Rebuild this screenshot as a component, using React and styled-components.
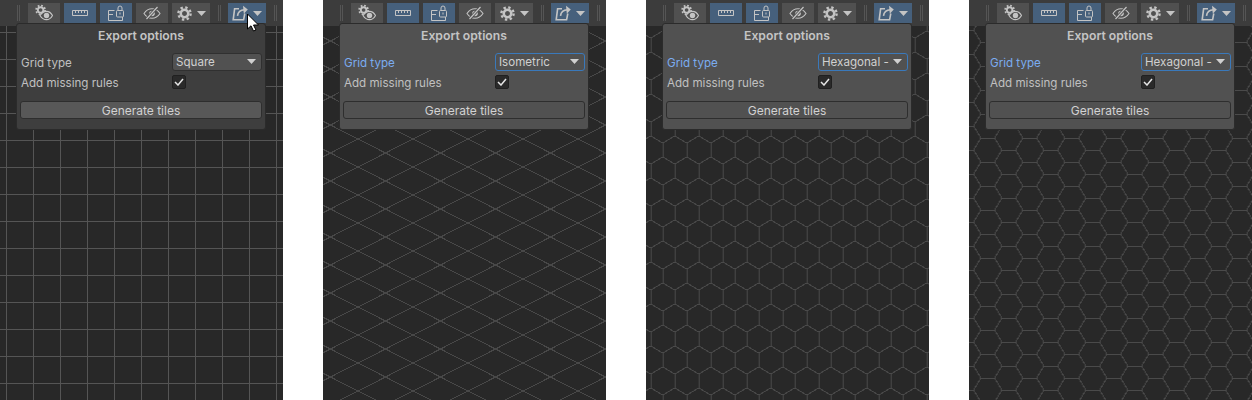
import React from "react";
import styled, { createGlobalStyle } from "styled-components";

const GlobalStyle = createGlobalStyle`
  html, body {
    margin: 0;
    padding: 0;
    background: #fff;
  }
  body {
    font-family: Inter, "Liberation Sans", sans-serif;
  }
`;

const Page = styled.div`
  display: flex;
  gap: 40px;
  width: 1252px;
  height: 400px;
  overflow: hidden;
`;

const Panel = styled.div`
  position: relative;
  display: flex;
  flex-direction: column;
  width: 283px;
  height: 400px;
  overflow: hidden;
  background: #282828;
`;

const Toolbar = styled.div`
  display: flex;
  align-items: flex-start;
  flex: none;
  height: 23px;
  padding: 3px 0 0 17px;
  background: #3c3c3c;
`;

const Grip = styled.span`
  flex: none;
  width: 3px;
  height: 16px;
  margin: 2px ${({ $after }) => $after || 0}px 0 ${({ $before }) => $before || 0}px;
  border-left: 1px solid #555;
  border-right: 1px solid #555;
  box-sizing: border-box;
`;

const ToolButton = styled.div`
  display: flex;
  align-items: center;
  justify-content: center;
  gap: 5px;
  flex: none;
  width: ${({ $wide }) => ($wide ? 38 : 32)}px;
  height: 20px;
  margin-right: 4px;
  background: ${({ $on }) => ($on ? "#46607c" : "#505050")};
  color: #c4c4c4;
`;

const Canvas = styled.div`
  flex: 1;
  min-height: 0;
`;

const GridSvg = styled.svg`
  display: block;
  width: 283px;
  height: 374px;
`;

const Popup = styled.div`
  position: absolute;
  left: 16px;
  top: 23px;
  width: 250px;
  height: 107px;
  box-sizing: border-box;
  padding: 3px 3px 0 3px;
  background: ${({ $light }) => ($light ? "#515151" : "#3e3e3e")};
  border: 1px solid #2b2b2b;
  border-radius: 3px;
  color: #c4c4c4;
  font-size: 11.6px;
`;

const Title = styled.div`
  height: 17px;
  line-height: 17px;
  margin-bottom: 9px;
  text-align: center;
  font-weight: 600;
  font-size: 12.2px;
  color: #c4c4c4;
`;

const Row = styled.div`
  display: grid;
  grid-template-columns: 152px 90px;
  align-items: center;
  height: ${({ $h }) => $h}px;
`;

const Label = styled.span`
  color: ${({ $focus }) => ($focus ? "#7bacf0" : "#c0c0c0")};
  padding: 1px 0 0 1px;
`;

const Select = styled.div`
  display: flex;
  align-items: center;
  justify-content: space-between;
  box-sizing: border-box;
  height: 18px;
  padding: 0 5px 1px 3px;
  background: #515151;
  border: 1px solid ${({ $focus }) => ($focus ? "#3a79bb" : "#303030")};
  border-radius: 3px;
  color: #d0d0d0;
  overflow: hidden;
  white-space: nowrap;
`;

const Check = styled.div`
  display: flex;
  align-items: center;
  justify-content: center;
  box-sizing: border-box;
  width: 14px;
  height: 14px;
  background: #2a2a2a;
  border: 1px solid #202020;
  border-radius: 2px;
`;

const GenerateButton = styled.div`
  box-sizing: border-box;
  height: 18px;
  line-height: 17px;
  margin-top: 8px;
  width: 242px;
  text-align: center;
  font-size: 12px;
  background: ${({ $light }) => ($light ? "#515151" : "#585858")};
  border: 1px solid #2e2e2e;
  border-radius: 3px;
  color: #d2d2d2;
`;

const CursorMark = styled.svg`
  position: absolute;
  left: 246px;
  top: 13px;
`;

const Caret = () => (
  <svg width={9} height={5} viewBox="0 0 9 5">
    <path d="M0 0h9L4.500 5z" fill="currentColor" />
  </svg>
);

const Gear = ({ cx, cy, scale = 1 }) => (
  <g transform={`translate(${cx} ${cy}) scale(${scale})`}>
    <circle r="6.2" fill="none" stroke="currentColor" strokeWidth="2.4" strokeDasharray="2.4 2.47" />
    <circle r="3.8" fill="none" stroke="currentColor" strokeWidth="2.6" />
  </g>
);

const EyeGearIcon = () => (
  <svg width="18" height="18" viewBox="0 0 18 18" fill="none" stroke="currentColor">
    <Gear cx={5.6} cy={6} scale={0.72} />
    <path d="M5 11.500C7 8.300 9.500 7.300 11.500 7.300s4.500 1.400 6 4.200c-1.500 2.800-4 4.200-6 4.200S7 14.700 5 11.500z" fill="#505050" strokeWidth="1.200" />
    <circle cx="11.500" cy="11.500" r="2.700" fill="currentColor" stroke="none" />
  </svg>
);

const RulerIcon = () => (
  <svg width="16" height="8" viewBox="0 0 16 8" fill="none" stroke="currentColor">
    <path d="M.5 1.500h15v5H.5z" />
    <path d="M3.500 2v2M6.500 2v2M9.500 2v2M12.500 2v2" />
  </svg>
);

const LockBoxIcon = () => (
  <svg width="18" height="18" viewBox="0 0 18 18" fill="none" stroke="currentColor">
    <path d="M7.500 6.500H1.500V16.500H15.500V13" />
    <path d="M1.500 10.500H6" />
    <path d="M11 6.500V4a2 2 0 0 1 4 0v2.500" />
    <rect x="9.500" y="6.500" width="7" height="6.500" rx="1" />
    <path d="M13 8.500v2" />
  </svg>
);

const EyeOffIcon = () => (
  <svg width="18" height="14" viewBox="0 0 18 14" fill="none" stroke="currentColor">
    <path d="M1 7.500C3.500 3.800 6.500 2.800 9 2.800s5.500 1 8 4.700c-2.500 3.700-5.500 4.700-8 4.700s-5.500-1-8-4.700z" strokeWidth="1.100" />
    <circle cx="9" cy="7.500" r="2.800" fill="currentColor" stroke="none" />
    <path d="M3.500 13L14.500 1" stroke="#505050" strokeWidth="3" />
    <path d="M3.500 13L14.500 1" strokeWidth="1.200" />
  </svg>
);

const GearIcon = () => (
  <svg width="15" height="15" viewBox="0 0 16 16">
    <Gear cx={8} cy={8} scale={1.05} />
  </svg>
);

const ExportIcon = () => (
  <svg width="16" height="16" viewBox="0 0 16 16" fill="none" stroke="currentColor" strokeWidth="1.600">
    <path d="M7 3.800H2.600L1.200 14.800H11.600L12.800 8.500" />
    <path d="M5.500 10.800C6 7.200 8.500 5 12.500 4.800" />
    <path d="M11 .8l4.800 3.800-4 4.200z" fill="currentColor" stroke="none" />
  </svg>
);

const grids = {
  square: { w: 27, h: 27, d: "M6.500 0V27M0 5.500H27", color: "#555" },
  iso: { w: 55, h: 28, d: "M0 0L55 28M0 28L55 0", color: "#484848" },
  hexFlat: { w: 42, h: 24, d: "M0 12L7 0H21L28 12L21 24H7L0 12M28 12H42", color: "#4a4a4a" },
  hexPointy: { w: 24, h: 42, d: "M12 0L24 7V21L12 28L0 21V7L12 0M12 28V42", color: "#4a4a4a" },
};

const TileGrid = ({ kind, x = 0, y = 0 }) => {
  const g = grids[kind];
  return (
    <GridSvg>
      <defs>
        <pattern
          id={kind}
          width={g.w}
          height={g.h}
          patternUnits="userSpaceOnUse"
          patternTransform={`translate(${x} ${y})`}
        >
          <path d={g.d} fill="none" stroke={g.color} shapeRendering="crispEdges" />
        </pattern>
      </defs>
      <rect width="283" height="374" fill={`url(#${kind})`} />
    </GridSvg>
  );
};

const panels = [
  { kind: "square", x: 0, y: 1, value: "Square", light: false, cursor: true },
  { kind: "iso", x: 35, y: 1, value: "Isometric", light: true },
  { kind: "hexPointy", x: 16.7, y: 26, value: "Hexagonal - ", light: true },
  { kind: "hexFlat", x: 4.7, y: 16, value: "Hexagonal - ", light: true },
];

const ToolPanel = ({ kind, x, y, value, light, cursor }) => (
  <Panel>
    <Toolbar>
      <Grip $after={8} />
      <ToolButton><EyeGearIcon /></ToolButton>
      <ToolButton $on><RulerIcon /></ToolButton>
      <ToolButton $on><LockBoxIcon /></ToolButton>
      <ToolButton><EyeOffIcon /></ToolButton>
      <ToolButton $wide><GearIcon /><Caret /></ToolButton>
      <Grip $before={4} $after={7} />
      <ToolButton $wide $on><ExportIcon /><Caret /></ToolButton>
      <Grip $before={4} />
    </Toolbar>
    <Canvas>
      <TileGrid kind={kind} x={x} y={y} />
    </Canvas>
    <Popup $light={light}>
      <Title>Export options</Title>
      <Row $h={18}>
        <Label $focus={light}>Grid type</Label>
        <Select $focus={light}>
          <span>{value}</span>
          <Caret />
        </Select>
      </Row>
      <Row $h={22}>
        <Label>Add missing rules</Label>
        <Check>
          <svg width="10" height="8" viewBox="0 0 10 8" fill="none">
            <path d="M1 4l3 3 5-6" stroke="#e4e4e4" strokeWidth="1.500" />
          </svg>
        </Check>
      </Row>
      <GenerateButton $light={light}>Generate tiles</GenerateButton>
    </Popup>
    {cursor && (
      <CursorMark width="14" height="20" viewBox="0 0 14 20">
        <path d="M1.500 1V16L5 12.800L7.500 18L10 17L7.500 12H12.500z" fill="#fff" stroke="#000" />
      </CursorMark>
    )}
  </Panel>
);

export default function App() {
  return (
    <>
      <GlobalStyle />
      <Page>
        {panels.map((p) => (
          <ToolPanel key={p.kind} {...p} />
        ))}
      </Page>
    </>
  );
}
